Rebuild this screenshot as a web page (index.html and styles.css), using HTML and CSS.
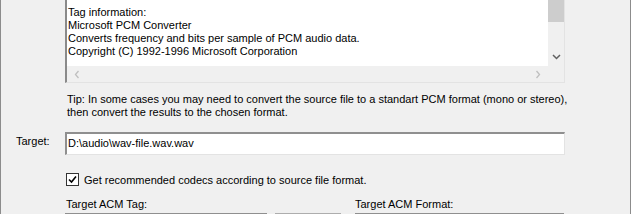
FILE: index.html
```html
<!DOCTYPE html>
<html lang="en">
<head>
  <meta charset="UTF-8">
  <title>Convert Audio</title>
  <link rel="stylesheet" href="styles.css">
</head>
<body>
  <div class="window">
    <div class="tagbox">
      <div class="tag-text">
        <div class="line">Tag information:</div>
        <div class="line">Microsoft PCM Converter</div>
        <div class="line">Converts frequency and bits per sample of PCM audio data.</div>
        <div class="line">Copyright (C) 1992-1996 Microsoft Corporation</div>
      </div>
      <div class="vscroll">
        <div class="thumb"></div>
        <svg class="arrow-down" width="9" height="6" viewBox="0 0 9 6"><path d="M1 1 L4.5 4.5 L8 1" fill="none" stroke="#606060" stroke-width="1.5"/></svg>
      </div>
      <div class="hscroll">
        <svg width="6" height="9" viewBox="0 0 6 9"><path d="M4.5 1 L1.5 4.5 L4.5 8" fill="none" stroke="#bfbfbf" stroke-width="1.3"/></svg>
        <svg width="6" height="9" viewBox="0 0 6 9"><path d="M1.5 1 L4.5 4.5 L1.5 8" fill="none" stroke="#bfbfbf" stroke-width="1.3"/></svg>
      </div>
      <div class="corner"></div>
    </div>

    <p class="tip">Tip: In some cases you may need to convert the source file to a standart PCM format (mono or stereo),<br>then convert the results to the chosen format.</p>

    <div class="target-row">
      <label class="target-label" for="target">Target:</label>
      <input class="field" id="target" type="text" value="D:\audio\wav-file.wav.wav">
    </div>

    <div class="check-row">
      <span class="checkbox">
        <svg width="9" height="9" viewBox="0 0 9 9"><path d="M1 4.5 L3.5 7 L8 1.5" fill="none" stroke="#000" stroke-width="1.6"/></svg>
      </span>
      <span>Get recommended codecs according to source file format.</span>
    </div>

    <div class="acm-labels">
      <span>Target ACM Tag:</span>
      <span>Target ACM Format:</span>
    </div>
    <div class="acm-combos">
      <div class="combo tag-combo"></div>
      <div class="mid-btn"></div>
      <div class="combo format-combo"></div>
    </div>
  </div>
</body>
</html>
```

FILE: styles.css
```css
html, body {
  margin: 0;
  padding: 0;
  background: #f0f0f0;
}
.window {
  width: 631px;
  height: 214px;
  box-sizing: border-box;
  border-left: 1px solid #8c8c8c;
  border-right: 1px solid #8c8c8c;
  overflow: hidden;
  font-family: "Liberation Sans", Arial, sans-serif;
  font-size: 11px;
  color: #000;
}
.tagbox {
  margin-left: 64px;
  width: 500px;
  height: 83px;
  box-sizing: border-box;
  border-left: 2px solid #8a8a8a;
  border-right: 1px solid #e3e3e3;
  border-bottom: 1px solid #e3e3e3;
  display: grid;
  grid-template-columns: 1fr 16px;
  grid-template-rows: 1fr 16px;
}
.tag-text {
  background: #fff;
  padding: 6px 0 0 1px;
  overflow: hidden;
  white-space: nowrap;
}
.line {
  height: 13px;
  line-height: 13px;
}
.vscroll {
  background: #f0f0f0;
  position: relative;
}
.thumb {
  width: 16px;
  height: 22px;
  background: #cdcdcd;
}
.arrow-down {
  position: absolute;
  left: 4px;
  top: 54px;
}
.hscroll {
  background: #f0f0f0;
  display: flex;
  justify-content: space-between;
  align-items: center;
  padding: 0 7px 0 7px;
}
.corner {
  background: #f0f0f0;
}
.tip {
  margin: 10px 0 0 66px;
  line-height: 13px;
}
.target-row {
  display: flex;
  align-items: center;
  margin-top: 13px;
}
.target-label {
  width: 49px;
  padding-left: 15px;
  margin-top: -5px;
}
.field {
  width: 500px;
  height: 23px;
  box-sizing: border-box;
  margin: 0;
  padding: 0 0 3px 1px;
  border-style: solid;
  border-width: 2px 1px 1px 2px;
  border-color: #8f8f8f #e3e3e3 #e3e3e3 #8f8f8f;
  background: #fff;
  font: inherit;
  color: #000;
  outline: none;
}
.check-row {
  display: flex;
  align-items: center;
  gap: 5px;
  margin: 18px 0 0 65px;
  height: 13px;
}
.checkbox {
  width: 13px;
  height: 13px;
  box-sizing: border-box;
  border: 1px solid #333;
  background: #fff;
  display: flex;
  align-items: center;
  justify-content: center;
}
.acm-labels {
  display: grid;
  grid-template-columns: 289px 1fr;
  margin: 12px 0 0 65px;
  line-height: 13px;
}
.acm-combos {
  display: flex;
  margin: 2px 0 0 64px;
  height: 10px;
}
.combo {
  height: 10px;
  box-sizing: border-box;
  border-top: 2px solid #8f8f8f;
  background: #fff;
}
.tag-combo {
  width: 202px;
}
.mid-btn {
  width: 66px;
  margin-left: 8px;
  border: 1px solid #adadad;
  background: #f5f5f5;
  box-sizing: border-box;
}
.format-combo {
  width: 209px;
  margin-left: 14px;
}
```
